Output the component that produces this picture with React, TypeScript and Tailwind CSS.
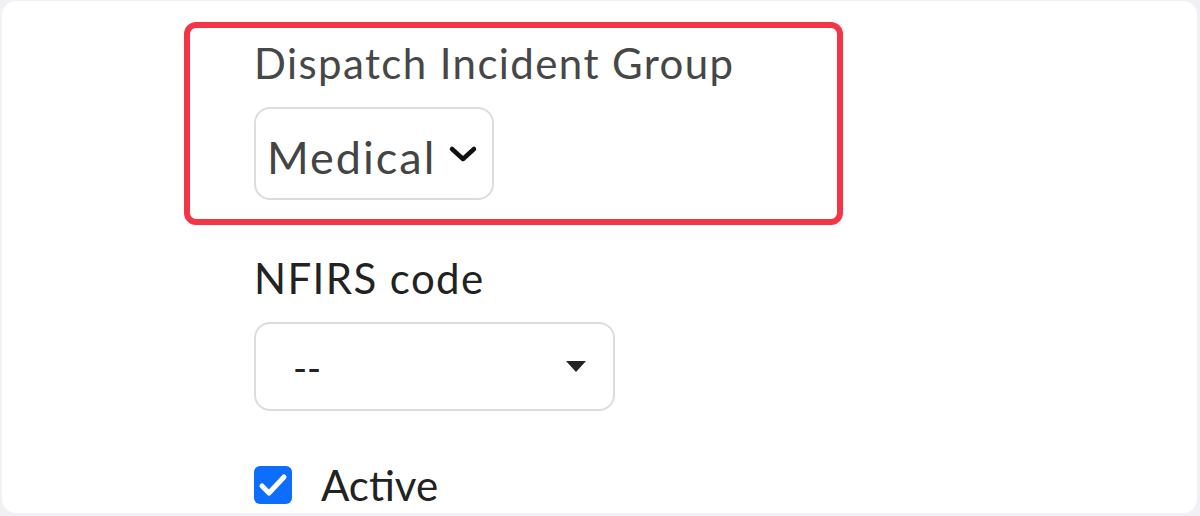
import React from "react";

const font = { fontFamily: "Lato, 'Noto Sans', sans-serif" };

function ChevronDown() {
  return (
    <svg width="30" height="18" viewBox="0 0 30 18" fill="none">
      <path
        d="M4 4 L15 14 L26 4"
        stroke="#111"
        strokeWidth="4.5"
        strokeLinecap="round"
        strokeLinejoin="round"
      />
    </svg>
  );
}

function Caret() {
  return (
    <svg width="20" height="11" viewBox="0 0 20 11">
      <path d="M0 0 H20 L10 11 Z" fill="#222" />
    </svg>
  );
}

export default function App() {
  return (
    <div
      className="w-[1200px] h-[516px] bg-[#f1f1f5] pt-[1px] pl-[2px] pr-[3px] pb-[3px]"
      style={font}
    >
      <div className="h-full bg-white rounded-[14px] pl-[182px] pt-[21px]">
        {/* highlighted field */}
        <div className="w-[659px] h-[203px] border-[6px] border-[#f43545] rounded-[12px] pl-[64px] pt-[11px]">
          <label className="block text-[42px] leading-[48px] tracking-[1.4px] text-[#474747]">
            Dispatch Incident Group
          </label>
          <div className="mt-[20px] w-[240px] h-[93px] border-2 border-[#dcdcdc] rounded-[16px] flex items-center pl-[11px] gap-[12px]">
            <span className="text-[45px] leading-[50px] tracking-[2px] text-[#444] mt-[6px]">
              Medical
            </span>
            <ChevronDown />
          </div>
        </div>

        <div className="ml-[70px]">
          <label className="block mt-[30px] text-[42px] leading-[46px] tracking-[1.4px] text-[#222]">
            NFIRS code
          </label>
          <div className="mt-[21px] w-[361px] h-[89px] border-2 border-[#dcdcdc] rounded-[16px] flex items-center justify-between pl-[37px] pr-[27px]">
            <span className="text-[38px] leading-[46px] text-[#222]">--</span>
            <Caret />
          </div>
          <div className="mt-[54px] flex items-center gap-[29px]">
            <div className="w-[38px] h-[38px] rounded-[6px] bg-[#0d6efd] flex items-center justify-center">
              <svg width="32" height="32" viewBox="0 0 32 32" fill="none">
                <path
                  d="M5 17 L12 24 L27 8"
                  stroke="#fff"
                  strokeWidth="5"
                  strokeLinecap="round"
                  strokeLinejoin="round"
                />
              </svg>
            </div>
            <span className="text-[42px] leading-[40px] text-[#222]">Active</span>
          </div>
        </div>
      </div>
    </div>
  );
}
